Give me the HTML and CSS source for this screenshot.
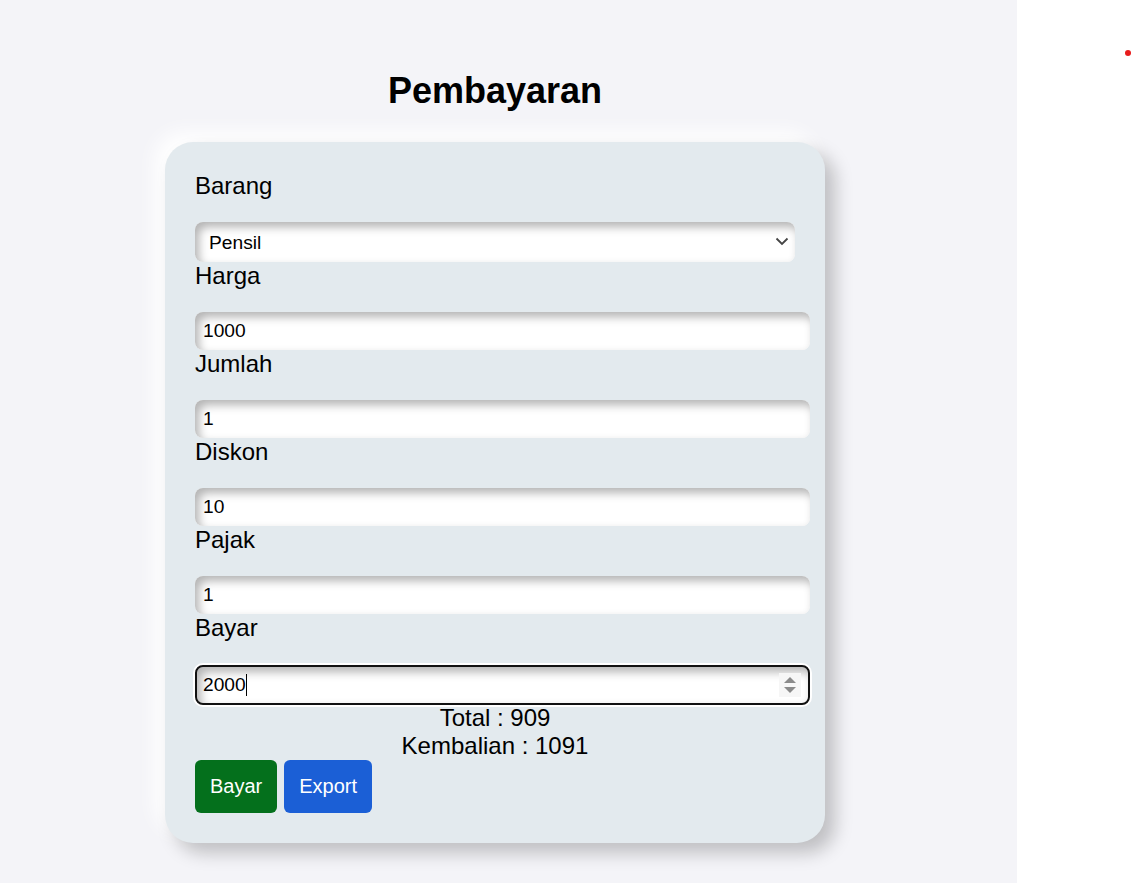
FILE: index.html
```html
<!DOCTYPE html>
<html lang="id">
<head>
<meta charset="utf-8">
<title>Pembayaran</title>
<link rel="stylesheet" href="styles.css">
</head>
<body>
<div class="layout">
  <main class="main">
    <div class="wrap">
      <h1 class="title">Pembayaran</h1>
      <form class="card">
        <label class="label" for="barang">Barang</label>
        <div class="select-wrap">
          <select id="barang" class="select">
            <option>Pensil</option>
            <option>Buku</option>
            <option>Penghapus</option>
          </select>
          <svg class="chevron" width="14" height="9" viewBox="0 0 14 9"><path d="M1.5 1.5 L7 7 L12.5 1.5" fill="none" stroke="#444" stroke-width="1.8"/></svg>
        </div>
        <label class="label" for="harga">Harga</label>
        <input id="harga" class="input" type="text" value="1000">
        <label class="label" for="jumlah">Jumlah</label>
        <input id="jumlah" class="input" type="text" value="1">
        <label class="label" for="diskon">Diskon</label>
        <input id="diskon" class="input" type="text" value="10">
        <label class="label" for="pajak">Pajak</label>
        <input id="pajak" class="input" type="text" value="1">
        <label class="label label-last" for="bayar">Bayar</label>
        <div class="focus-wrap">
          <input id="bayar" class="input input-focus" type="text" value="2000">
          <span class="caret"></span>
          <span class="spinner">
            <svg width="16" height="22" viewBox="0 0 16 22"><path d="M2 9 L8 3 L14 9 Z" fill="#8a8a8a"/><path d="M2 13 L8 19 L14 13 Z" fill="#8a8a8a"/></svg>
          </span>
        </div>
        <div class="summary">
          <div>Total : 909</div>
          <div>Kembalian : 1091</div>
        </div>
        <div class="actions">
          <button type="button" class="btn btn-green">Bayar</button>
          <button type="button" class="btn btn-blue">Export</button>
        </div>
      </form>
    </div>
  </main>
  <aside class="side"><span class="dot"></span></aside>
</div>
</body>
</html>
```
FILE: styles.css
```css
html, body {
  margin: 0;
  padding: 0;
}
body {
  font-family: "Liberation Sans", Arial, sans-serif;
  color: #000;
  background: #fff;
}
.layout {
  display: flex;
  height: 883px;
  overflow: hidden;
}
.main {
  width: 1017px;
  flex: none;
  background: #f4f4f8;
}
.wrap {
  width: 660px;
  margin-left: 165px;
  padding-top: 70px;
}
.title {
  margin: 0 0 31px;
  font-size: 36px;
  line-height: 41px;
  font-weight: bold;
  text-align: center;
}
.card {
  background: #e3eaee;
  border-radius: 28px;
  padding: 30px 30px 30px 30px;
  box-shadow: 10px 10px 18px rgba(0, 0, 0, 0.22), -10px -10px 20px #ffffff;
  display: flex;
  flex-direction: column;
  align-items: flex-start;
}
.label {
  display: block;
  font-size: 24px;
  line-height: 28px;
  margin-bottom: 22px;
}
.label-last {
  margin-bottom: 23px;
}
.select-wrap {
  position: relative;
  width: 600px;
}
.select {
  appearance: none;
  -webkit-appearance: none;
  display: block;
  width: 600px;
  height: 40px;
  border: none;
  border-radius: 8px;
  background: #fff;
  box-shadow: inset 4px 5px 10px #b4b4b4, inset -3px -3px 8px #ffffff;
  font-family: "Liberation Sans", Arial, sans-serif;
  font-size: 19.2px;
  color: #000;
  padding: 0 14px;
  outline: none;
}
.chevron {
  position: absolute;
  right: 6px;
  top: 15px;
}
.input {
  box-sizing: border-box;
  display: block;
  width: 615px;
  height: 38px;
  border: none;
  border-radius: 8px;
  background: #fff;
  box-shadow: inset 4px 5px 10px #b4b4b4, inset -3px -3px 8px #ffffff;
  font-family: "Liberation Sans", Arial, sans-serif;
  font-size: 19.2px;
  color: #000;
  padding: 0 8px;
  outline: none;
}
.focus-wrap {
  position: relative;
  width: 615px;
}
.input-focus {
  height: 40px;
  border: 2px solid #111;
  padding: 0 6px;
  box-shadow: 0 0 0 2px #ffffff, inset 4px 5px 10px #b4b4b4, inset -3px -3px 8px #ffffff;
}
.caret {
  position: absolute;
  left: 51px;
  top: 9px;
  width: 1px;
  height: 22px;
  background: #000;
}
.spinner {
  position: absolute;
  right: 9px;
  top: 8px;
  width: 22px;
  height: 24px;
  background: #f6f6f6;
  display: flex;
  align-items: center;
  justify-content: center;
}
.summary {
  align-self: stretch;
  text-align: center;
  font-size: 24px;
  line-height: 28px;
  margin-top: -1px;
}
.actions {
  display: flex;
  gap: 7px;
}
.btn {
  border: none;
  border-radius: 6px;
  color: #fff;
  font-family: "Liberation Sans", Arial, sans-serif;
  font-size: 20px;
  line-height: 23px;
  padding: 15px 15px;
  cursor: pointer;
}
.btn-green {
  background: #04701c;
}
.btn-blue {
  background: #1b5fd6;
}
.side {
  flex: 1;
  position: relative;
  background: #fff;
}
.dot {
  position: absolute;
  left: 108px;
  top: 50px;
  width: 6px;
  height: 6px;
  border-radius: 50%;
  background: #e81c1c;
}
```
